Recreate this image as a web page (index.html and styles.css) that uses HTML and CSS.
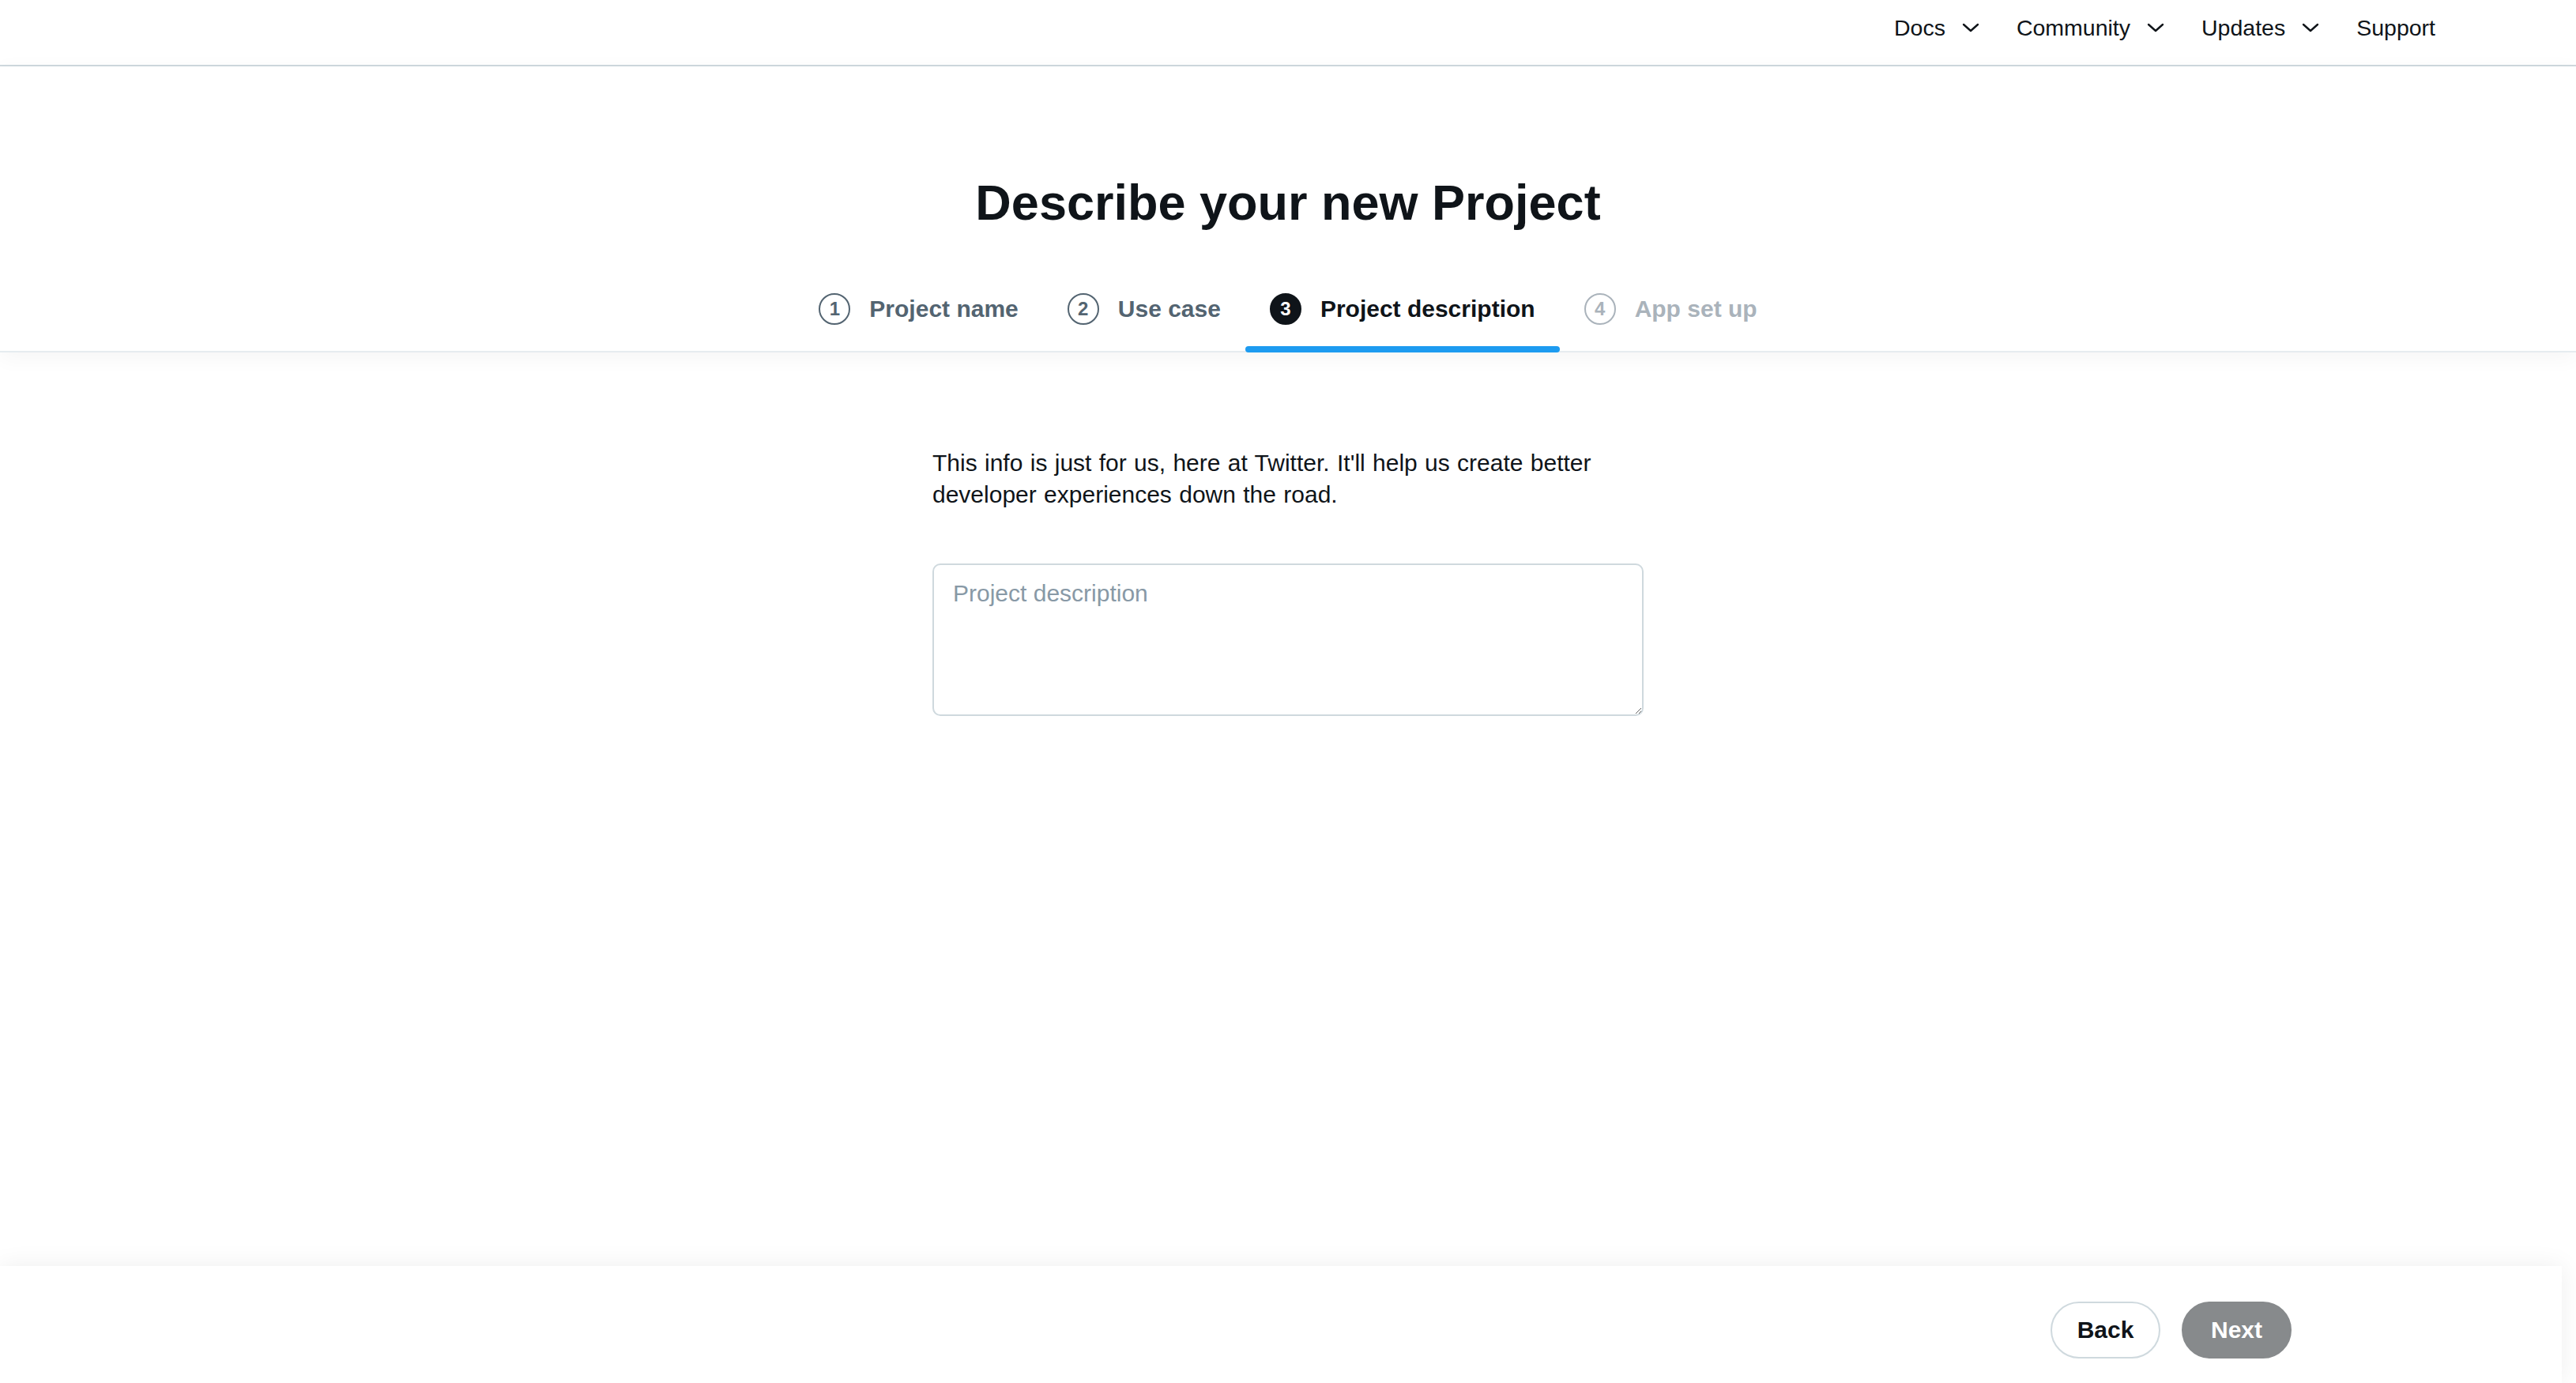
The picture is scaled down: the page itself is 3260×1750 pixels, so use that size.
FILE: index.html
```html
<!DOCTYPE html>
<html lang="en">
<head>
<meta charset="utf-8">
<title>Describe your new Project</title>
<link rel="stylesheet" href="styles.css">
</head>
<body>
<div class="page">
  <nav class="topnav">
    <ul class="navlist">
      <li class="navitem">Docs <svg class="chev" viewBox="0 0 22 12" width="22" height="12"><polyline points="2,2 11,10 20,2" fill="none" stroke="#0f1419" stroke-width="2.4" stroke-linecap="round" stroke-linejoin="round"/></svg></li>
      <li class="navitem">Community <svg class="chev" viewBox="0 0 22 12" width="22" height="12"><polyline points="2,2 11,10 20,2" fill="none" stroke="#0f1419" stroke-width="2.4" stroke-linecap="round" stroke-linejoin="round"/></svg></li>
      <li class="navitem">Updates <svg class="chev" viewBox="0 0 22 12" width="22" height="12"><polyline points="2,2 11,10 20,2" fill="none" stroke="#0f1419" stroke-width="2.4" stroke-linecap="round" stroke-linejoin="round"/></svg></li>
      <li class="navitem">Support</li>
    </ul>
  </nav>

  <header class="wizard-head">
    <h1 class="title">Describe your new Project</h1>
    <ol class="steps">
      <li class="step done"><span class="num">1</span><span class="label">Project name</span></li>
      <li class="step done"><span class="num">2</span><span class="label">Use case</span></li>
      <li class="step active"><span class="num">3</span><span class="label">Project description</span></li>
      <li class="step todo"><span class="num">4</span><span class="label">App set up</span></li>
    </ol>
  </header>

  <main class="content">
    <div class="column">
      <p class="intro">This info is just for us, here at Twitter. It'll help us create better developer experiences down the road.</p>
      <textarea class="desc" placeholder="Project description"></textarea>
    </div>
  </main>

  <footer class="actions">
    <button class="btn back">Back</button>
    <button class="btn next">Next</button>
  </footer>
</div>
</body>
</html>
```

FILE: styles.css
```css
* { box-sizing: border-box; }
html, body { margin: 0; padding: 0; }
body {
  font-family: "Liberation Sans", Arial, Helvetica, sans-serif;
  color: #0f1419;
  background: #ffffff;
}
.page {
  height: 1750px;
  display: flex;
  flex-direction: column;
  overflow: hidden;
}

/* top nav */
.topnav {
  height: 84px;
  border-bottom: 2px solid #cfd9de;
  display: flex;
  justify-content: flex-end;
  padding: 0 178px 12px 0;
  align-items: center;
  flex: none;
}
.navlist {
  list-style: none;
  margin: 0;
  padding: 0;
  display: flex;
  gap: 47px;
}
.navitem {
  font-size: 28.5px;
  line-height: 34px;
  display: flex;
  align-items: center;
  gap: 21px;
}
.chev { display: block; }

/* wizard header */
.wizard-head {
  flex: none;
  padding-top: 135px;
  border-bottom: 2px solid #e6ecf0;
  box-shadow: 0 6px 26px rgba(0, 0, 0, 0.045);
  position: relative;
  z-index: 1;
  background: #fff;
}
.title {
  margin: 0;
  text-align: center;
  font-size: 63px;
  line-height: 74px;
  font-weight: 700;
  color: #0f1419;
}
.steps {
  list-style: none;
  margin: 45px 0 0 0;
  padding: 0;
  display: flex;
  justify-content: center;
  gap: 0;
}
.step {
  position: relative;
  height: 106px;
  padding: 0 31px;
  display: flex;
  align-items: center;
  gap: 24px;
  color: #536471;
}
.num {
  width: 40px;
  height: 40px;
  border-radius: 50%;
  border: 2px solid currentColor;
  display: flex;
  align-items: center;
  justify-content: center;
  font-size: 24px;
  font-weight: 700;
  line-height: 1;
}
.label {
  font-size: 30px;
  font-weight: 700;
  line-height: 36px;
}
.step.active { color: #0f1419; }
.step.active .num {
  background: #0f1419;
  border-color: #0f1419;
  color: #ffffff;
}
.step.active::after {
  content: "";
  position: absolute;
  left: 0;
  right: 0;
  bottom: -2px;
  height: 8px;
  border-radius: 4px;
  background: #1d9bf0;
}
.step.todo { color: #aab3bb; }

/* content */
.content {
  flex: 1;
  display: flex;
  justify-content: center;
  padding-top: 120px;
}
.column {
  width: 900px;
}
.intro {
  margin: 0;
  font-size: 30px;
  line-height: 40px;
  word-spacing: 1px;
  color: #0f1419;
}
.desc {
  display: block;
  margin-top: 67px;
  width: 900px;
  height: 193px;
  border: 2px solid #cfd9de;
  border-radius: 10px;
  padding: 16px 24px;
  font-family: "Liberation Sans", Arial, Helvetica, sans-serif;
  font-size: 30px;
  line-height: 40px;
  color: #0f1419;
  outline: none;
}
.desc::placeholder { color: #8899a6; }

/* footer */
.actions {
  flex: none;
  height: 148px;
  margin-right: 18px;
  background: #fff;
  box-shadow: 0 0 30px rgba(0, 0, 0, 0.07);
  display: flex;
  justify-content: flex-end;
  align-items: flex-start;
  padding: 45px 342px 0 0;
  gap: 27px;
}
.btn {
  height: 72px;
  width: 139px;
  border-radius: 36px;
  font-family: "Liberation Sans", Arial, Helvetica, sans-serif;
  font-size: 30px;
  font-weight: 700;
  padding: 0;
  cursor: pointer;
}
.btn.back {
  background: #fff;
  border: 2px solid #cfd9de;
  color: #0f1419;
}
.btn.next {
  background: #878a8c;
  border: 2px solid #878a8c;
  color: #ffffff;
}
```
